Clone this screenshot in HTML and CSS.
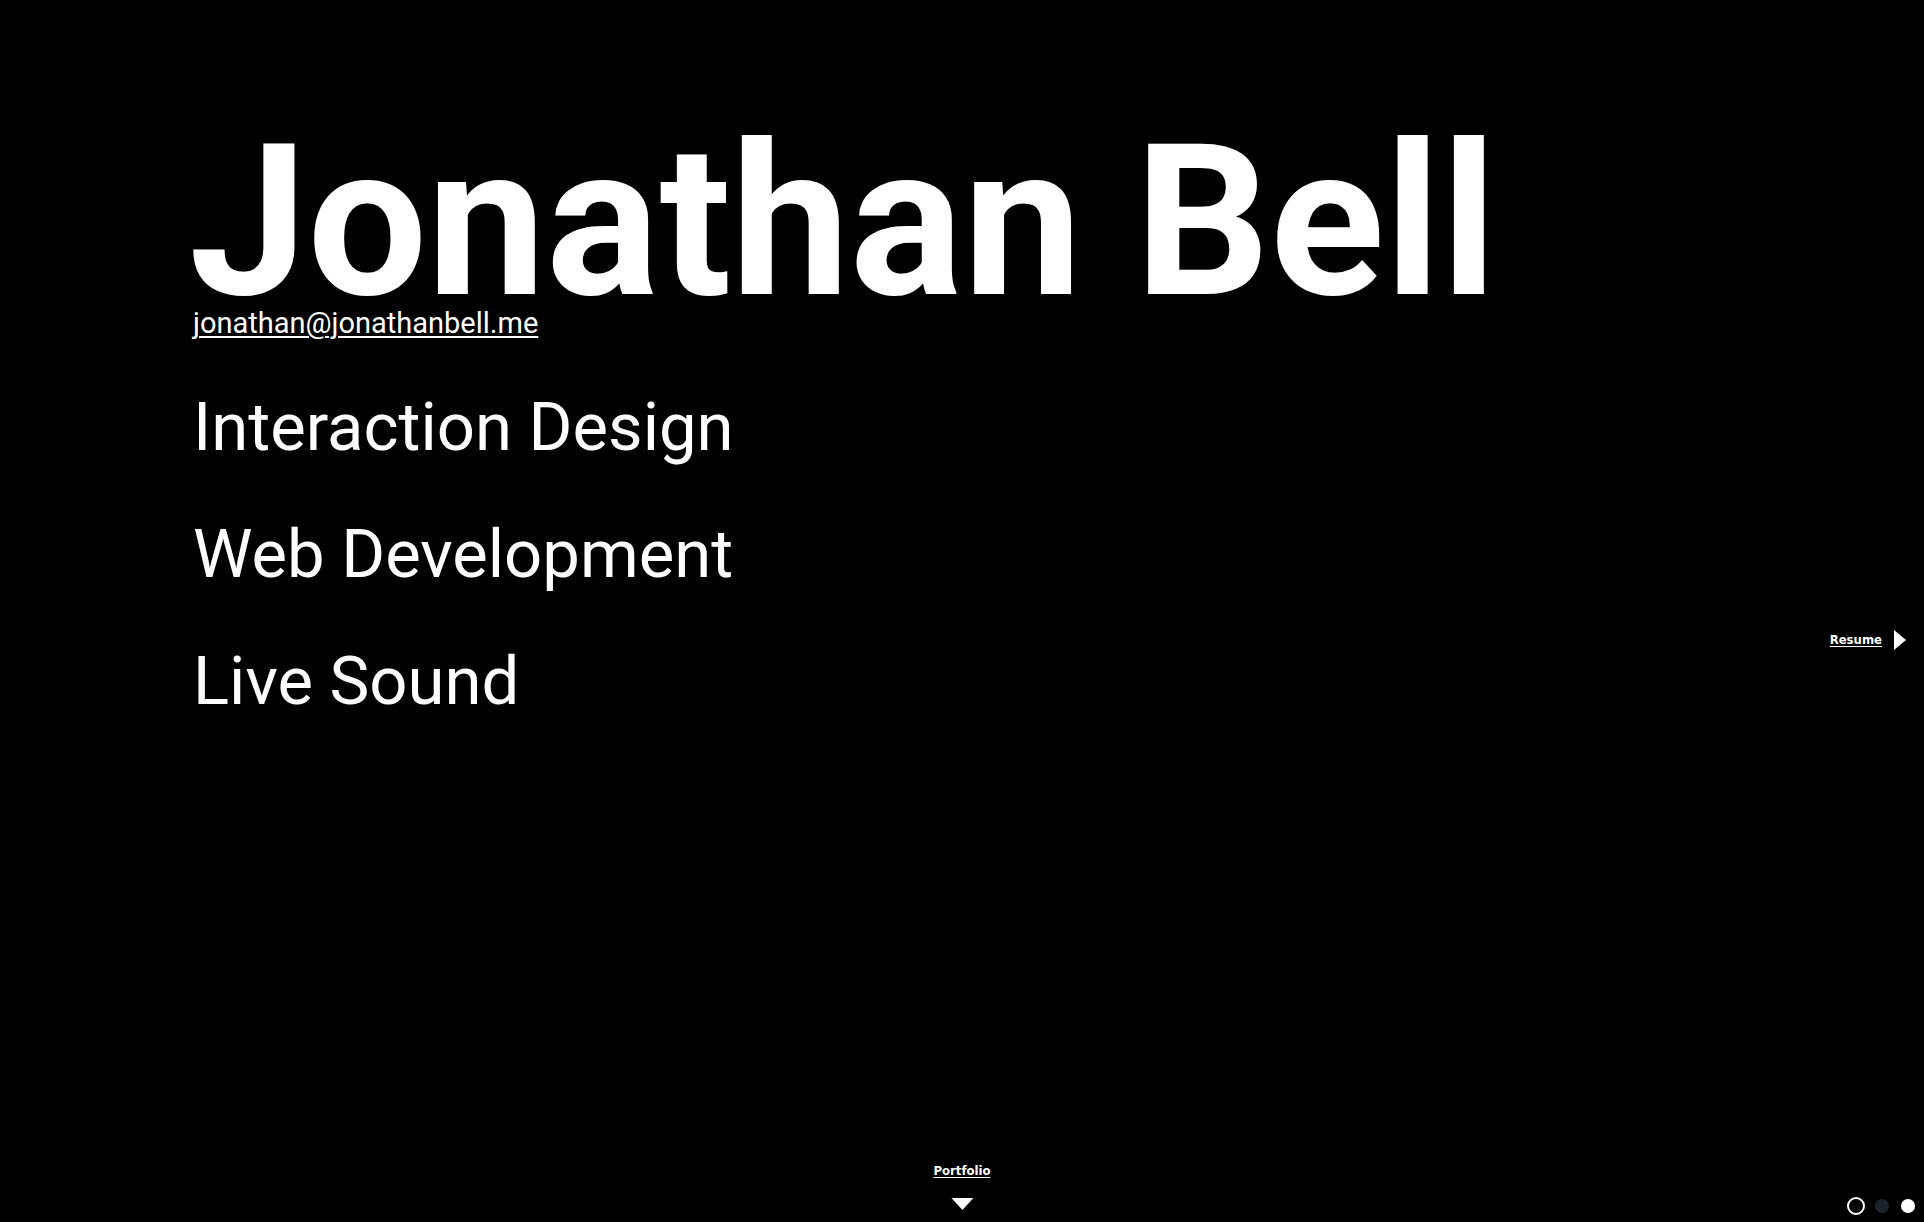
FILE: index.html
```html
<!DOCTYPE html>
<html lang="en">
<head>
<meta charset="utf-8">
<title>Jonathan Bell</title>
<link rel="stylesheet" href="styles.css">
</head>
<body>
<main class="intro">
  <h1 class="name">Jonathan Bell</h1>
  <a class="email" href="#">jonathan@jonathanbell.me</a>
  <ul class="skills">
    <li>Interaction Design</li>
    <li>Web Development</li>
    <li>Live Sound</li>
  </ul>
</main>
<a class="nav-right" href="#">Resume<span class="tri-right"></span></a>
<a class="nav-down" href="#">Portfolio<span class="tri-down"></span></a>
<div class="dots">
  <span class="dot dot-ring"></span>
  <span class="dot dot-dark"></span>
  <span class="dot dot-white"></span>
</div>
</body>
</html>
```
FILE: styles.css
```css
html, body {
  margin: 0;
  padding: 0;
  background: #000;
  color: #fff;
  height: 100%;
  overflow: hidden;
}
body {
  font-family: Roboto, "Liberation Sans", sans-serif;
  position: relative;
  width: 1924px;
  height: 1222px;
}
.intro {
  padding: 141px 0 0 193px;
  display: flex;
  flex-direction: column;
  align-items: flex-start;
}
.name {
  margin: 0 0 0 -4px;
  font-size: 212px;
  font-weight: 700;
  line-height: 0.76;
}
.email {
  margin-top: 7px;
  color: #fff;
  font-size: 29px;
  line-height: 1;
  text-decoration: underline;
  text-underline-offset: 3px;
  text-decoration-thickness: 2px;
}
.skills {
  list-style: none;
  margin: 26px 0 0;
  padding: 0;
  font-size: 67px;
  line-height: 127px;
}
.nav-right {
  position: absolute;
  right: 18px;
  top: 630px;
  display: flex;
  align-items: center;
  gap: 12px;
  color: #fff;
  font-family: "DejaVu Sans", sans-serif;
  font-weight: 700;
  font-size: 11.7px;
  text-decoration: underline;
  text-underline-offset: 2px;
}
.tri-right {
  width: 0;
  height: 0;
  border-top: 10px solid transparent;
  border-bottom: 10px solid transparent;
  border-left: 12px solid #fff;
}
.nav-down {
  position: absolute;
  left: 50%;
  top: 1164px;
  transform: translateX(-50%);
  display: flex;
  flex-direction: column;
  align-items: center;
  gap: 20px;
  color: #fff;
  font-family: "DejaVu Sans", sans-serif;
  font-weight: 700;
  font-size: 11.7px;
  text-decoration: underline;
  text-underline-offset: 2px;
}
.tri-down {
  width: 0;
  height: 0;
  border-left: 11px solid transparent;
  border-right: 11px solid transparent;
  border-top: 12px solid #fff;
}
.dots {
  position: absolute;
  right: 9px;
  top: 1197px;
  display: flex;
  align-items: center;
  gap: 12px;
}
.dot {
  display: block;
  width: 14px;
  height: 14px;
  border-radius: 50%;
  box-sizing: border-box;
}
.dot-ring {
  width: 18px;
  height: 18px;
  border: 2.5px solid #fff;
  margin-right: -2px;
}
.dot-dark {
  background: #1c232b;
}
.dot-white {
  background: #fff;
}
```
